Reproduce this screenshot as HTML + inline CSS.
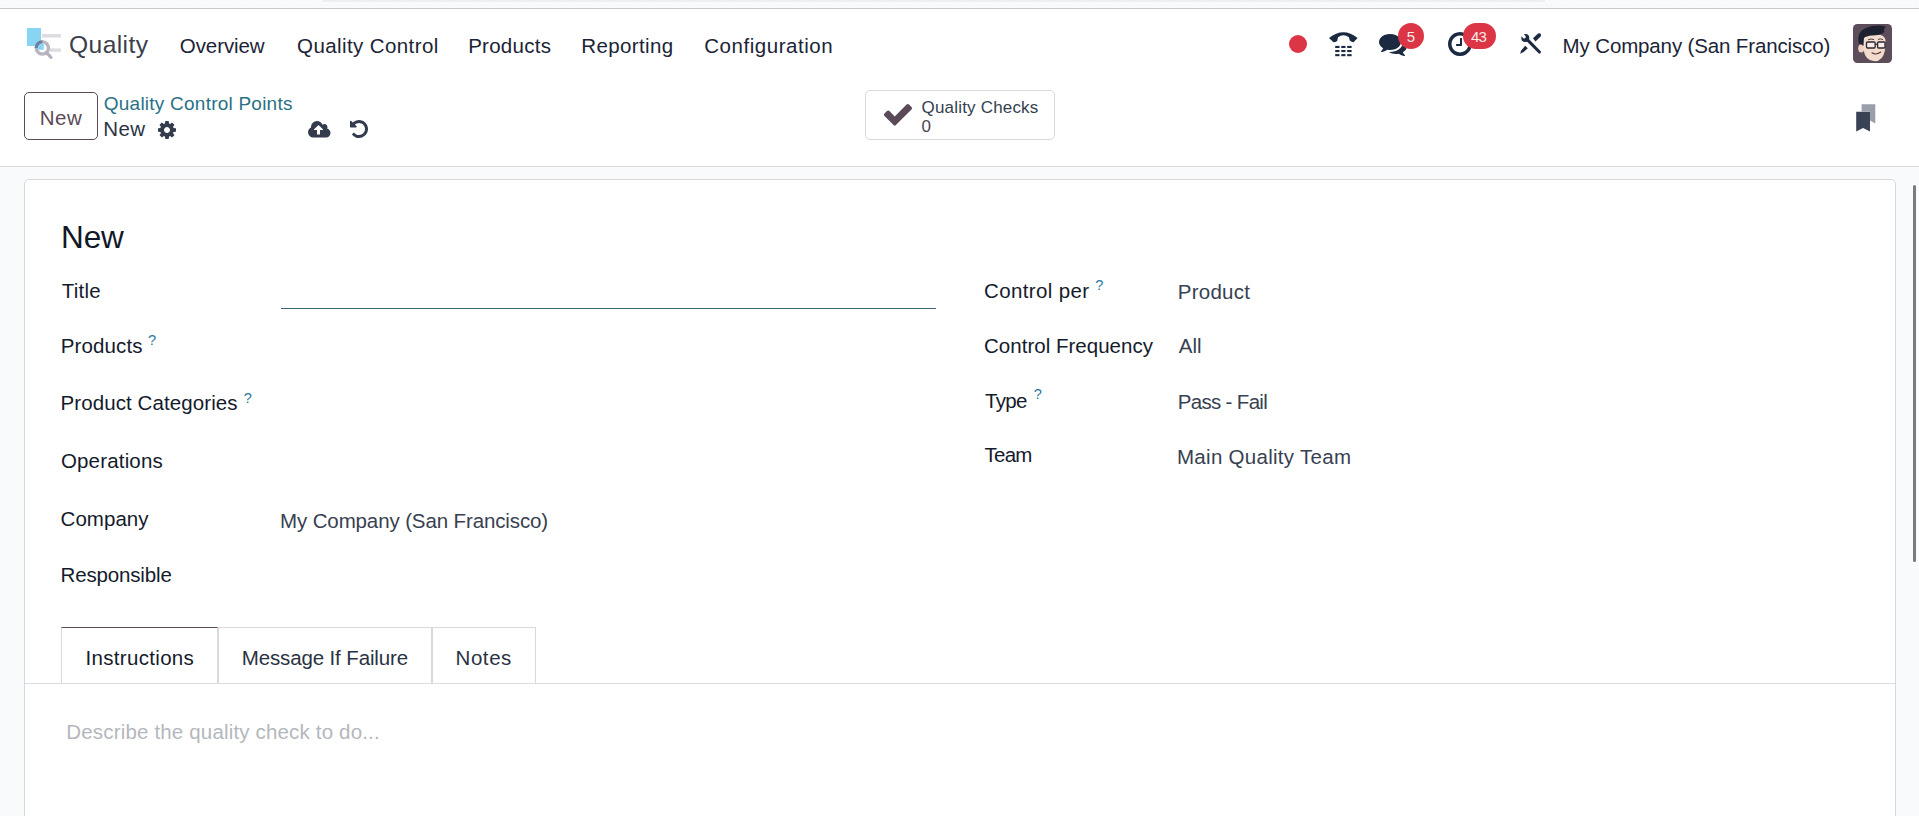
<!DOCTYPE html>
<html lang="en">
<head>
<meta charset="utf-8">
<title>Odoo - Quality Control Points - New</title>
<style>
html,body{margin:0;padding:0}
body{width:1919px;height:816px;overflow:hidden;position:relative;background:#f9fafb;font-family:"Liberation Sans",sans-serif;}
.abs{position:absolute}
.t{position:absolute;white-space:nowrap;line-height:normal;font-weight:400}
svg{position:absolute;overflow:visible}
#chrome{left:0;top:0;width:1919px;height:8px;background:#f9fafb linear-gradient(90deg,#eeeeef 1px,transparent 1px) 1px 5px/5px 1px repeat-x}
#chrome .band{left:322px;top:0;width:1223px;height:2px;background:#efeff1}
#chromeline{left:0;top:8px;width:1919px;height:1px;background:#c9c9c9}
header#navbar{left:0;top:9px;width:1919px;height:70px;background:#fff}
#cp{left:0;top:79px;width:1919px;height:87px;background:#fff;border-bottom:1px solid #d9dadc}
#btn-new{left:24px;top:92px;width:72px;height:46px;border:1px solid #5b4a57;border-radius:5px;background:#fff}
#statbtn{left:865px;top:90px;width:188px;height:48px;border:1px solid #d9d9d9;border-radius:5px;background:#fff}
#sheet{left:24px;top:179px;width:1870px;height:700px;border:1px solid #d6d8db;border-radius:5px;background:#fff}
#title-line{left:281px;top:308px;width:655px;height:1px;background:#396572}
.tab{top:627px;height:56px;border:1px solid #dadada;border-bottom:none;background:#fff;box-sizing:border-box}
#tabline{left:25px;top:683px;width:1870px;height:1px;background:#dcdcdc}
#tab1{left:61px;width:157px;border-top-color:#5b4a57}
#tab2{left:218px;width:214px}
#tab3{left:432px;width:104px}
.badge{background:#dc3545;border-radius:13px;top:23px;height:26px}
#scroll{left:1913px;top:185px;width:3px;height:377px;background:#7b7b7d;border-radius:2px}
#brand{left:69.00px;top:31.30px;font-size:24.6px;color:#3b3f4c;letter-spacing:0.417px}
#m1{left:179.80px;top:34.00px;font-size:20.5px;color:#1b2436;letter-spacing:-0.086px}
#m2{left:297.10px;top:34.00px;font-size:20.5px;color:#1b2436;letter-spacing:0.400px}
#m3{left:468.20px;top:34.00px;font-size:20.5px;color:#1b2436;letter-spacing:0.257px}
#m4{left:581.30px;top:34.00px;font-size:20.5px;color:#1b2436;letter-spacing:0.375px}
#m5{left:704.20px;top:34.00px;font-size:20.5px;color:#1b2436;letter-spacing:0.542px}
#comp{left:1562.60px;top:34.00px;font-size:20.5px;color:#1b2436;letter-spacing:-0.136px}
#b5{left:1406.80px;top:28.00px;font-size:15px;color:#f6ece8;letter-spacing:0.000px}
#b43{left:1471.10px;top:28.00px;font-size:15px;color:#f6ece8;letter-spacing:-0.900px}
#btnnew{left:39.80px;top:105.75px;font-size:20.5px;color:#5b4a57;letter-spacing:0.450px}
#bc1{left:103.80px;top:92.60px;font-size:19px;color:#2a7186;letter-spacing:0.233px}
#bc2{left:103.20px;top:117.40px;font-size:20.5px;color:#2b3342;letter-spacing:0.400px}
#qc1{left:921.50px;top:97.75px;font-size:17px;color:#33414f;letter-spacing:0.192px}
#qc2{left:921.50px;top:117.30px;font-size:17px;color:#4b4450;letter-spacing:0.000px}
#h1{left:61.00px;top:218.90px;font-size:31.5px;color:#111827;letter-spacing:-0.100px}
#l1{left:61.70px;top:278.90px;font-size:20.5px;color:#141b2b;letter-spacing:0.275px}
#l2{left:60.70px;top:333.50px;font-size:20.5px;color:#141b2b;letter-spacing:0.143px}
#l2q{left:148.00px;top:332.00px;font-size:14.6px;color:#2c7a9c;letter-spacing:0.000px}
#l3{left:60.50px;top:391.40px;font-size:20.5px;color:#141b2b;letter-spacing:0.094px}
#l3q{left:243.75px;top:389.80px;font-size:14.6px;color:#2c7a9c;letter-spacing:0.000px}
#l4{left:60.90px;top:449.40px;font-size:20.5px;color:#141b2b;letter-spacing:0.178px}
#l5{left:60.60px;top:507.30px;font-size:20.5px;color:#141b2b;letter-spacing:0.025px}
#v5{left:280.00px;top:508.50px;font-size:20.5px;color:#374151;letter-spacing:-0.120px}
#l6{left:60.50px;top:562.60px;font-size:20.5px;color:#141b2b;letter-spacing:-0.150px}
#r1{left:984.00px;top:278.50px;font-size:20.5px;color:#141b2b;letter-spacing:0.370px}
#r1q{left:1095.20px;top:276.70px;font-size:14.6px;color:#2c7a9c;letter-spacing:0.000px}
#rv1{left:1177.70px;top:279.70px;font-size:20.5px;color:#374151;letter-spacing:0.267px}
#r2{left:984.00px;top:333.50px;font-size:20.5px;color:#141b2b;letter-spacing:0.019px}
#rv2{left:1178.70px;top:334.30px;font-size:20.5px;color:#374151;letter-spacing:0.050px}
#r3{left:985.00px;top:388.80px;font-size:20.5px;color:#141b2b;letter-spacing:-0.667px}
#r3q{left:1033.70px;top:386.30px;font-size:14.6px;color:#2c7a9c;letter-spacing:0.000px}
#rv3{left:1177.70px;top:389.70px;font-size:20.5px;color:#374151;letter-spacing:-0.670px}
#r4{left:984.40px;top:443.30px;font-size:20.5px;color:#141b2b;letter-spacing:-0.700px}
#rv4{left:1177.00px;top:444.50px;font-size:20.5px;color:#374151;letter-spacing:0.287px}
#t1{left:85.50px;top:645.80px;font-size:20.5px;color:#141b2b;letter-spacing:0.318px}
#t2{left:241.70px;top:645.80px;font-size:20.5px;color:#2a3342;letter-spacing:-0.129px}
#t3{left:455.50px;top:645.80px;font-size:20.5px;color:#2a3342;letter-spacing:0.575px}
#ph{left:66.30px;top:719.70px;font-size:20.5px;color:#b4b7bc;letter-spacing:0.168px}
</style>
</head>
<body>
<div id="chrome" class="abs"><div class="band abs"></div></div>
<div id="chromeline" class="abs"></div>

<header id="navbar" class="abs"></header>
<!-- app logo -->
<svg id="logo" style="left:24px;top:24px" width="40" height="38" viewBox="24 24 40 38">
  <rect x="27" y="28" width="14" height="18" fill="#88d4f3"/>
  <rect x="42" y="34" width="19" height="3.6" fill="#dfdce1"/>
  <rect x="50" y="48.4" width="11" height="3.4" fill="#dfdce1"/>
  <circle cx="42.4" cy="48" r="6.1" fill="#fff" stroke="#b9b5c1" stroke-width="3.4"/>
  <path d="M36.3 48 A6.1 6.1 0 0 1 42.4 41.9" fill="none" stroke="#6f7f9e" stroke-width="3.4"/>
  <clipPath id="lens"><circle cx="42.4" cy="48" r="4.6"/></clipPath>
  <rect x="37" y="42" width="6.8" height="7.8" fill="#88d4f3" clip-path="url(#lens)"/>
  <path d="M47.2 53.4 L51 57.4" stroke="#b3aebb" stroke-width="3" stroke-linecap="round"/>
</svg>
<nav>
<span class="t" id="brand">Quality</span>
<span class="t" id="m1">Overview</span>
<span class="t" id="m2">Quality Control</span>
<span class="t" id="m3">Products</span>
<span class="t" id="m4">Reporting</span>
<span class="t" id="m5">Configuration</span>
</nav>

<!-- systray -->
<div class="abs" style="left:1289px;top:34.5px;width:18px;height:18px;border-radius:50%;background:#dc3545"></div>
<svg id="voip" style="left:1329px;top:31.6px" width="29" height="25" viewBox="0 0 29 25" fill="#1b2a41">
  <path d="M0 6.1 Q14.3 -5.6 28.6 6 L24.5 10.3 Q22.4 10 20.8 8.5 L19.9 5.2 Q14.3 1.4 9 5.2 L8.2 9 Q6.5 10.2 4.5 10.3 Z"/>
  <g>
   <rect x="6.2" y="13.9" width="4.3" height="2.1"/><rect x="12.3" y="13.9" width="4.2" height="2.1"/><rect x="18.2" y="13.9" width="4.4" height="2.1"/>
   <rect x="6.2" y="18" width="4.3" height="2.1"/><rect x="12.3" y="18" width="4.2" height="2.1"/><rect x="18.2" y="18" width="4.4" height="2.1"/>
   <rect x="6.2" y="22.1" width="4.3" height="2.1"/><rect x="12.3" y="22.1" width="4.2" height="2.1"/><rect x="18.2" y="22.1" width="4.4" height="2.1"/>
  </g>
</svg>
<svg id="chat" style="left:1379.1px;top:29.8px" width="28" height="28" viewBox="0 0 1792 1792" fill="#1b2a41"><path d="M1408 768q0 139-94 257t-256.500 186.500-353.500 68.500q-86 0-176-16-124 88-278 128-36 9-86 16h-3q-11 0-20.500-8t-11.500-21q-1-3-1-6.500t.5-6.500 2-6l2.500-5 3.500-5.500 4-5 4.500-5 4-4.500q5-6 23-25t26-29.500 22.500-29 25-38.500 20.500-44q-124-72-195-177t-71-224q0-139 94-257t256.500-186.500 353.500-68.500 353.500 68.500 256.500 186.500 94 257zm384 256q0 120-71 224.500t-195 176.500q10 24 20.500 44t25 38.500 22.500 29 26 29.500 23 25q1 1 4 4.500t4.500 5 4 5 3.500 5.500l2.500 5 2 6 .5 6.500-1 6.500q-3 14-13 22t-22 7q-50-7-86-16-154-40-278-128-90 16-176 16-271 0-472-132 58 4 88 4 161 0 309-45t264-129q125-92 192-212t67-254q0-77-23-152 129 71 204 178t75 230z"/></svg>
<div class="abs badge" style="left:1398px;width:26px"></div>
<span class="t" id="b5">5</span>
<svg id="clock" style="left:1445.9px;top:29.9px" width="28" height="28" viewBox="0 0 1792 1792" fill="#1b2a41"><path d="M1024 544v448q0 14-9 23t-23 9h-320q-14 0-23-9t-9-23v-64q0-14 9-23t23-9h224v-352q0-14 9-23t23-9h64q14 0 23 9t9 23zm416 352q0-148-73-273t-198-198-273-73-273 73-198 198-73 273 73 273 198 198 273 73 273-73 198-198 73-273zm224 0q0 209-103 385.500t-279.500 279.500-385.500 103-385.500-103-279.500-279.500-103-385.500 103-385.500 279.500-279.500 385.500-103 385.500 103 279.500 279.500 103 385.500z"/></svg>
<div class="abs badge" style="left:1463px;width:33px"></div>
<span class="t" id="b43">43</span>
<svg id="tools" style="left:1520px;top:33px" width="22" height="22" viewBox="0 0 22 22" fill="#1b2a41">
  <path d="M7 6.4 L19.4 19" fill="none" stroke="#1b2a41" stroke-width="3.1" stroke-linecap="round"/>
  <circle cx="5.3" cy="4.9" r="4"/>
  <path d="M4.2 3.8 L-0.5 -0.9" fill="none" stroke="#fff" stroke-width="3.1" stroke-linecap="round"/>
  <path d="M13 5.3 L18 0.6 Q20.2 -0.2 20.9 1.2 L20.9 3.2 L15.5 8.6 Z"/>
  <path d="M5.2 12.7 L7.8 15.3 L3.6 19 L0.1 20.7 L1.2 17.6 Z"/>
</svg>
<span class="t" id="comp">My Company (San Francisco)</span>
<!-- avatar -->
<svg id="avatar" style="left:1853px;top:24px" width="39" height="39" viewBox="0 0 39 39">
  <rect width="39" height="39" rx="4.5" fill="#5d4c59"/>
  <ellipse cx="8.2" cy="24.5" rx="3" ry="4" fill="#ecd2c2"/>
  <path d="M10 14 Q10 10 20 10 Q32.5 10 32.5 17 L32 26 Q30 37.3 21.5 37.3 Q12.5 37 10.5 26 Z" fill="#f3dccd"/>
  <path d="M6 20 Q3 8 13 4 Q22 0 33 2.5 Q30 5 31.5 8 Q27 11.5 19 11.5 Q13 12 11 14 L10.3 22 Q7.5 19 6 20Z" fill="#1e2230"/>
  <rect x="13.5" y="18" width="8.6" height="6" rx="1" fill="#f7ece6" stroke="#2a2530" stroke-width="1.3"/>
  <rect x="24.6" y="18" width="7.4" height="6" rx="1" fill="#f7ece6" stroke="#2a2530" stroke-width="1.3"/>
  <path d="M22 20.3 L24.6 20.3" stroke="#2a2530" stroke-width="1.2"/>
  <path d="M19 28.7 Q23 31.5 27.8 28" fill="none" stroke="#5d3a3a" stroke-width="1.1" stroke-linecap="round"/>
  <path d="M15 15.8 Q18 14.3 21 15.6 M25 15.4 Q27.5 14.3 30 15.6" fill="none" stroke="#3a2f35" stroke-width="0.9"/>
</svg>

<!-- control panel -->
<div id="cp" class="abs"></div>
<div id="btn-new" class="abs"></div>
<span class="t" id="btnnew">New</span>
<span class="t" id="bc1">Quality Control Points</span>
<span class="t" id="bc2">New</span>
<svg id="cog" style="left:158px;top:121.3px" width="18" height="18" viewBox="128 128 1536 1536" fill="#333b4d"><path d="M1152 896q0-106-75-181t-181-75-181 75-75 181 75 181 181 75 181-75 75-181zm512-109v222q0 12-8 23t-20 13l-185 28q-19 54-39 91 35 50 107 138 10 12 10 25t-9 23q-27 37-99 108t-94 71q-12 0-26-9l-138-108q-44 23-91 38-16 136-29 186-7 28-36 28h-222q-14 0-24.500-8.500t-11.500-21.500l-28-184q-49-16-90-37l-141 107q-10 9-25 9-14 0-25-11-126-114-165-168-7-10-7-23 0-12 8-23 15-21 51-66.500t54-70.500q-27-50-41-99l-183-27q-13-2-21-12.500t-8-23.500v-222q0-12 8-23t19-13l186-28q14-46 39-92-40-57-107-138-10-12-10-24 0-10 9-23 26-36 98.500-107.500t94.500-71.500q13 0 26 10l138 107q44-23 91-38 16-136 29-186 7-28 36-28h222q14 0 24.500 8.500t11.500 21.500l28 184q49 16 90 37l142-107q9-9 24-9 13 0 25 10 129 119 165 170 7 8 7 22 0 12-8 23-15 21-51 66.500t-54 70.500q26 50 41 98l183 28q13 2 21 12.500t8 23.500z"/></svg>
<svg id="cloud" style="left:307.7px;top:121px" width="22.5" height="16.5" viewBox="0 128 1920 1408" fill="#333b4d"><path d="M1280 864q0-14-9-23l-352-352q-9-9-23-9t-23 9l-351 351q-10 12-10 24 0 14 9 23t23 9h224v352q0 13 9.500 22.500t22.500 9.500h192q13 0 22.500-9.500t9.500-22.500v-352h224q13 0 22.500-9.500t9.500-22.500zm640 288q0 159-112.500 271.500t-271.500 112.500h-1088q-185 0-316.500-131.500t-131.500-316.500q0-130 70-240t188-165q-2-30-2-43 0-212 150-362t362-150q156 0 285.500 87t188.500 231q71-62 166-62 106 0 181 75t75 181q0 76-41 138 130 31 213.500 135.500t83.500 238.500z"/></svg>
<svg id="undo" style="left:350px;top:120.1px" width="18" height="18" viewBox="128 128 1536 1536" fill="#333b4d"><path d="M1664 896q0 156-61 298t-164 245-245 164-298 61q-172 0-327-72.500t-264-204.500q-7-10-6.500-22.500t8.500-20.500l137-138q10-9 25-9 16 2 23 12 73 95 179 147t225 52q104 0 198.500-40.500t163.500-109.500 109.500-163.500 40.500-198.500-40.500-198.500-109.500-163.500-163.500-109.500-198.500-40.500q-98 0-188 35.500t-160 101.500l137 138q31 30 14 69-17 40-59 40h-448q-26 0-45-19t-19-45v-448q0-42 40-59 39-17 69 14l130 129q107-101 244.500-156.500t284.500-55.500q156 0 298 61t245 164 164 245 61 298z"/></svg>
<div id="statbtn" class="abs"></div>
<svg id="check" style="left:884px;top:104.4px" width="28" height="21.5" viewBox="121 334 1550 1188" preserveAspectRatio="none" fill="#5b4a57"><path d="M1671 566q0 40-28 68l-724 724-136 136q-28 28-68 28t-68-28l-136-136-362-362q-28-28-28-68t28-68l136-136q28-28 68-28t68 28l294 295 656-657q28-28 68-28t68 28l136 136q28 28 28 68z"/></svg>
<span class="t" id="qc1">Quality Checks</span>
<span class="t" id="qc2">0</span>
<svg id="bookmarks" style="left:1856px;top:104px" width="20" height="28" viewBox="1856 104 20 28">
  <path d="M1861.6 104.3 L1875.3 104.3 L1875.3 123.6 L1870 120.5 L1870 111.5 L1861.6 111.5 Z" fill="#9a9fab"/>
  <path d="M1856.2 111.7 L1870 111.7 L1870 131.6 L1863.1 128 L1856.2 131.6 Z" fill="#3a4256"/>
</svg>

<!-- form sheet -->
<main id="sheet" class="abs"></main>
<span class="t" id="h1">New</span>
<span class="t" id="l1">Title</span>
<div id="title-line" class="abs"></div>
<span class="t" id="l2">Products</span><span class="t" id="l2q">?</span>
<span class="t" id="l3">Product Categories</span><span class="t" id="l3q">?</span>
<span class="t" id="l4">Operations</span>
<span class="t" id="l5">Company</span><span class="t" id="v5">My Company (San Francisco)</span>
<span class="t" id="l6">Responsible</span>
<span class="t" id="r1">Control per</span><span class="t" id="r1q">?</span><span class="t" id="rv1">Product</span>
<span class="t" id="r2">Control Frequency</span><span class="t" id="rv2">All</span>
<span class="t" id="r3">Type</span><span class="t" id="r3q">?</span><span class="t" id="rv3">Pass - Fail</span>
<span class="t" id="r4">Team</span><span class="t" id="rv4">Main Quality Team</span>

<div id="tabline" class="abs"></div>
<div id="tab1" class="tab abs"></div>
<div id="tab2" class="tab abs"></div>
<div id="tab3" class="tab abs"></div>
<span class="t" id="t1">Instructions</span>
<span class="t" id="t2">Message If Failure</span>
<span class="t" id="t3">Notes</span>
<span class="t" id="ph">Describe the quality check to do...</span>
<div id="scroll" class="abs"></div>
</body>
</html>
